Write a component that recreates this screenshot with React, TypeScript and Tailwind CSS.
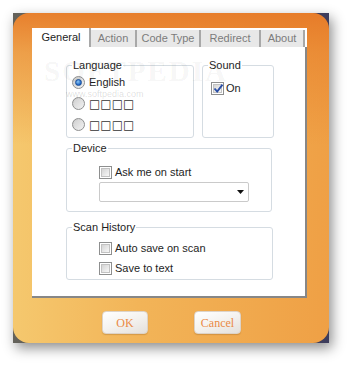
import React from "react";

const font = { fontFamily: '"Liberation Sans", Arial, sans-serif' };

function Radio({ checked }: { checked?: boolean }) {
  return (
    <div className="w-[13px] h-[13px] rounded-full border border-[#8e8f8f] bg-[linear-gradient(135deg,#c9c9c9,#f4f4f4)] flex items-center justify-center shrink-0">
      {checked ? (
        <div className="w-[7px] h-[7px] rounded-full bg-[radial-gradient(circle_at_40%_35%,#8cc8f5,#1c63c4_70%)] border border-[#1a4f9a]" />
      ) : (
        <div className="w-[9px] h-[9px] rounded-full bg-[linear-gradient(135deg,#d2d2d2,#efefef)]" />
      )}
    </div>
  );
}

function Check({ checked }: { checked?: boolean }) {
  return (
    <div className="relative w-[13px] h-[13px] border border-[#8e8f8f] bg-white p-[1px] shrink-0">
      <div className="w-full h-full border border-[#c2c2c2] bg-[linear-gradient(135deg,#d4d4d4,#f7f7f7)]" />
      {checked && (
        <svg className="absolute left-[1px] top-[0px]" width="11" height="11" viewBox="0 0 11 11">
          <path d="M1.5 5.5 L4.2 8.6 L9.5 1.6" fill="none" stroke="#2a4ea6" strokeWidth="1.9" />
        </svg>
      )}
    </div>
  );
}

function Group({
  label,
  className,
  children,
}: {
  label: string;
  className: string;
  children: React.ReactNode;
}) {
  return (
    <div className={"relative border border-[#d5dce2] rounded-[3px] " + className}>
      <span className="absolute left-[5px] top-[-8px] bg-white px-[1px] text-[11px] leading-[14px] text-[#1e1e1e]">
        {label}
      </span>
      {children}
    </div>
  );
}

export default function App() {
  const tabs = [
    { name: "Action", w: "w-[46px]" },
    { name: "Code Type", w: "w-[64px]" },
    { name: "Redirect", w: "w-[60px]" },
    { name: "About", w: "w-[44px]" },
  ];
  return (
    <div className="relative w-[350px] h-[365px] bg-white pt-[13px] pl-[13px] overflow-hidden" style={font}>
      <div className="w-[316px] h-[330px] bg-[linear-gradient(to_right,#64625a,#3d3c5c)] shadow-[3px_5px_12px_rgba(0,0,0,0.45)]">
        <div className="w-full h-full rounded-[16px] bg-[linear-gradient(to_bottom,rgba(230,120,38,0.9)_0%,rgba(230,120,38,0.5)_12%,rgba(230,120,38,0)_40%),linear-gradient(to_right,#f5c86e,#f2b458_40%,#efa045)] pl-[19px] pt-[15px] flex flex-col">
          <div className="w-[275px] h-[270px] bg-white flex flex-col">
            <div className="h-[19px] flex items-end pl-[1px]">
              <div className="w-[58px] h-[19px] bg-white border-r-2 border-[#a8a8a8] flex items-center justify-center text-[11px] text-[#1e1e1e]">
                General
              </div>
              {tabs.map((t) => (
                <div
                  key={t.name}
                  className={
                    t.w +
                    " h-[17px] bg-[#e8e8e8] border-r-2 border-[#a8a8a8] flex items-center justify-center text-[11px] text-[#7c7c7c]"
                  }
                >
                  {t.name}
                </div>
              ))}
            </div>
            <div className="flex-1 border-r-2 border-b-2 border-[#878787] pl-[34px] pt-[18px] flex flex-col">
              <div className="flex gap-[8px]">
                <Group label="Language" className="w-[128px] h-[73px] pt-[6px] pl-[5px]">
                  <div className="h-[21px] flex items-center gap-[4px]">
                    <Radio checked />
                    <span className="text-[11px] text-[#1e1e1e]">English</span>
                  </div>
                  <div className="h-[21px] flex items-center gap-[4px]">
                    <Radio />
                    <span className="text-[12px] text-[#333]" style={{ fontFamily: '"DejaVu Sans", sans-serif' }}>□□□□</span>
                  </div>
                  <div className="h-[21px] flex items-center gap-[4px]">
                    <Radio />
                    <span className="text-[12px] text-[#333]" style={{ fontFamily: '"DejaVu Sans", sans-serif' }}>□□□□</span>
                  </div>
                </Group>
                <Group label="Sound" className="w-[72px] h-[73px] pt-[15px] pl-[8px]">
                  <div className="h-[15px] flex items-center gap-[2px]">
                    <Check checked />
                    <span className="text-[11px] text-[#1e1e1e]">On</span>
                  </div>
                </Group>
              </div>
              <Group label="Device" className="mt-[10px] w-[206px] h-[64px] pt-[16px] pl-[32px]">
                <div className="h-[15px] flex items-center gap-[3px]">
                  <Check />
                  <span className="text-[11px] text-[#1e1e1e]">Ask me on start</span>
                </div>
                <div className="mt-[2px] w-[150px] h-[20px] border border-[#cacaca] rounded-[2px] bg-white flex items-center justify-end pr-[4px]">
                  <svg width="7" height="4" viewBox="0 0 7 4">
                    <path d="M0 0 H7 L3.5 4 Z" fill="#111" />
                  </svg>
                </div>
              </Group>
              <Group label="Scan History" className="mt-[15px] w-[207px] h-[53px] pt-[10px] pl-[32px]">
                <div className="h-[20px] flex items-center gap-[3px]">
                  <Check />
                  <span className="text-[11px] text-[#1e1e1e]">Auto save on scan</span>
                </div>
                <div className="h-[20px] flex items-center gap-[3px]">
                  <Check />
                  <span className="text-[11px] text-[#1e1e1e]">Save to text</span>
                </div>
              </Group>
            </div>
          </div>
          <div className="mt-[13px] pl-[70px] flex gap-[46px]">
            <button
              className="w-[46px] h-[23px] rounded-[4px] border border-[#ddd3c8] bg-[linear-gradient(160deg,#ffffff,#f4f2ef_50%,#e4e0db)] shadow-[0_1px_1px_rgba(120,70,20,0.25)] text-[12px] text-[#ea8a45]"
              style={{ fontFamily: '"Liberation Serif", serif' }}
            >
              OK
            </button>
            <button
              className="w-[47px] h-[23px] rounded-[4px] border border-[#ddd3c8] bg-[linear-gradient(160deg,#ffffff,#f4f2ef_50%,#e4e0db)] shadow-[0_1px_1px_rgba(120,70,20,0.25)] text-[12px] text-[#ea8a45]"
              style={{ fontFamily: '"Liberation Serif", serif' }}
            >
              Cancel
            </button>
          </div>
        </div>
      </div>
      <div className="pointer-events-none absolute left-[44px] top-[56px] text-[29px] leading-[30px] font-bold tracking-[2px] text-[rgba(0,0,0,0.05)]" style={{ fontFamily: '"Liberation Serif", serif' }}>
        SOFTPEDIA
      </div>
      <div className="pointer-events-none absolute left-[66px] top-[89px] text-[9px] leading-[10px] text-[rgba(0,0,0,0.14)]">
        www.softpedia.com
      </div>
    </div>
  );
}
